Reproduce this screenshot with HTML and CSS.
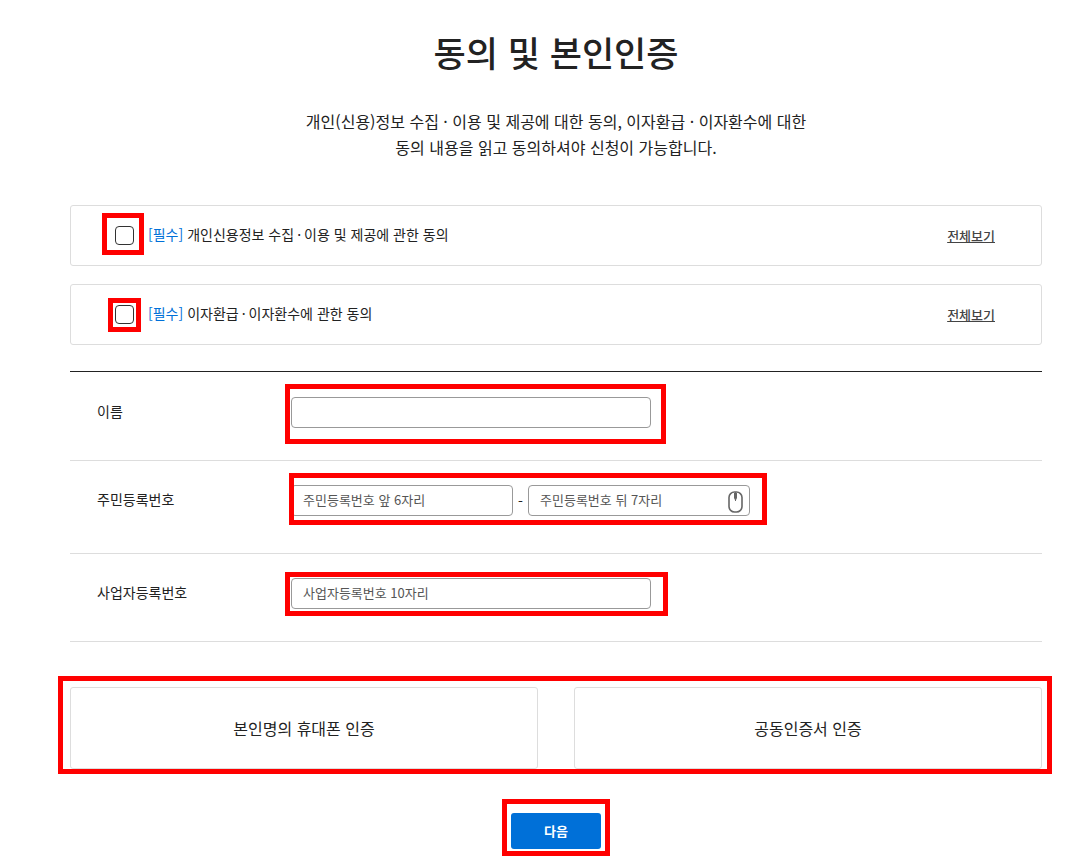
FILE: index.html
```html
<!DOCTYPE html>
<html lang="ko">
<head>
  <meta charset="UTF-8">
  <meta name="viewport" content="width=device-width, initial-scale=1">
  <title>동의 및 본인인증</title>
  <link rel="stylesheet" href="styles.css">
</head>
<body>

  <main class="page">
    <h1>동의 및 본인인증</h1>
    <p class="intro">
      개인(신용)정보 수집 · 이용 및 제공에 대한 동의, 이자환급 · 이자환수에 대한<br>
      동의 내용을 읽고 동의하셔야 신청이 가능합니다.
    </p>

    <form>
      <div class="agree">
        <span class="check mark mark-wide"><input type="checkbox" id="agree1"></span>
        <label for="agree1"><em>[필수]</em> 개인신용정보 수집<span class="dot">·</span>이용 및 제공에 관한 동의</label>
        <a href="#">전체보기</a>
      </div>
      <div class="agree">
        <span class="check mark mark-tight"><input type="checkbox" id="agree2"></span>
        <label for="agree2"><em>[필수]</em> 이자환급<span class="dot">·</span>이자환수에 관한 동의</label>
        <a href="#">전체보기</a>
      </div>

      <div class="fields">
        <div class="row row-name">
          <label for="name">이름</label>
          <div class="control mark mark-name">
            <input type="text" id="name" class="full">
          </div>
        </div>
        <div class="row row-rrn">
          <label for="rrn1">주민등록번호</label>
          <div class="control mark mark-rrn">
            <input type="text" id="rrn1" class="half" placeholder="주민등록번호 앞 6자리">
            <span class="dash">-</span>
            <div class="secure">
              <input type="text" id="rrn2" class="half" placeholder="주민등록번호 뒤 7자리" aria-label="주민등록번호 뒤 7자리">
              <svg class="mouse" width="15" height="22" viewBox="0 0 15 22" fill="none" stroke="#666">
                <rect x="1" y="1" width="13" height="20" rx="5.5" stroke-width="1.6"/>
                <path d="M7.5 1v9" stroke-width="1"/>
                <path d="M6 2h3v5L7.5 10 6 7z" fill="#666" stroke="none"/>
              </svg>
            </div>
          </div>
        </div>
        <div class="row row-biz">
          <label for="biz">사업자등록번호</label>
          <div class="control mark mark-biz">
            <input type="text" id="biz" class="full" placeholder="사업자등록번호 10자리">
          </div>
        </div>
      </div>

      <div class="auth mark mark-auth">
        <button type="button">본인명의 휴대폰 인증</button>
        <button type="button">공동인증서 인증</button>
      </div>

      <div class="submit">
        <span class="mark mark-next"><button type="submit">다음</button></span>
      </div>
    </form>
  </main>

</body>
</html>
```
FILE: styles.css
```css
* {
  box-sizing: border-box;
}

body {
  margin: 0;
  background: #fff;
  color: #222;
  font-family: "Noto Sans CJK KR", sans-serif;
  font-size: 14px;
  line-height: 20px;
}

button, input {
  font-family: inherit;
}

.page {
  padding: 26px 26px 0 70px;
}

h1 {
  margin: 0;
  font-size: 35px;
  font-weight: 500;
  line-height: 52px;
  text-align: center;
}

.intro {
  margin: 30px 0 45px;
  font-size: 16px;
  line-height: 26px;
  text-align: center;
}

/* red guide boxes */
.mark {
  position: relative;
}

.mark::after {
  content: "";
  position: absolute;
  border: 5px solid #f00;
  pointer-events: none;
}

.mark-wide::after { inset: -13px -10px -10px -13px; }
.mark-tight::after { inset: -7px -7px -8px -7px; }
.mark-name::after { inset: -13px -15px -16px -6px; }
.mark-rrn::after { inset: -12px -17px -9px -2px; }
.mark-biz::after { inset: -6px -17px -7px -6px; }
.mark-auth::after { inset: -11px -10px -5px -12px; }
.mark-next::after { inset: -14px -9px -7px -9px; }

/* agreements */
.agree {
  display: flex;
  align-items: center;
  height: 61px;
  margin-bottom: 18px;
  padding: 0 46px 0 44px;
  border: 1px solid #ddd;
  border-radius: 3px;
}

.check {
  display: flex;
  margin-right: 14px;
}

.check input {
  appearance: none;
  width: 19px;
  height: 19px;
  margin: 0;
  border: 1px solid #333;
  border-radius: 4px;
}

.check input:checked {
  background: #0070d8;
}

.agree label {
  padding-bottom: 3px;
}

.agree em {
  color: #0070d8;
  font-style: normal;
}

.dot {
  margin: 0 3px;
}

.agree a {
  margin-left: auto;
  color: #444;
  font-size: 13px;
  font-weight: 500;
}

/* form rows */
.fields {
  margin-top: 26px;
  border-top: 1px solid #222;
}

.row {
  display: flex;
  align-items: flex-start;
  border-bottom: 1px solid #ddd;
}

.row-name { padding: 25px 0 32px; }
.row-rrn { padding: 24px 0 37px; }
.row-biz { padding: 24px 0 32px; }

.row > label {
  width: 221px;
  padding: 4px 0 0 27px;
}

.control {
  display: flex;
  align-items: center;
}

.control input {
  height: 31px;
  padding: 0 11px 3px;
  border: 1px solid #999;
  border-radius: 4px;
  background: #fff;
  color: #222;
  font-size: 13px;
}

.control input::placeholder {
  color: #555;
}

.full {
  width: 360px;
}

.half {
  width: 222px;
}

.dash {
  width: 15px;
  text-align: center;
}

.secure {
  display: flex;
  position: relative;
}

.mouse {
  position: absolute;
  top: 6px;
  right: 7px;
}

/* buttons */
.auth {
  display: flex;
  gap: 36px;
  margin-top: 45px;
}

.auth button {
  flex: 1;
  height: 82px;
  border: 1px solid #ddd;
  border-radius: 3px;
  background: #fff;
  color: #222;
  font-size: 16px;
  cursor: pointer;
}

.submit {
  display: flex;
  justify-content: center;
  margin-top: 44px;
  padding-bottom: 14px;
}

.submit button {
  display: block;
  width: 90px;
  height: 36px;
  padding: 0 0 2px;
  border: 0;
  border-radius: 3px;
  background: #0070d8;
  color: #fff;
  font-size: 13px;
  font-weight: 700;
  cursor: pointer;
}
```
